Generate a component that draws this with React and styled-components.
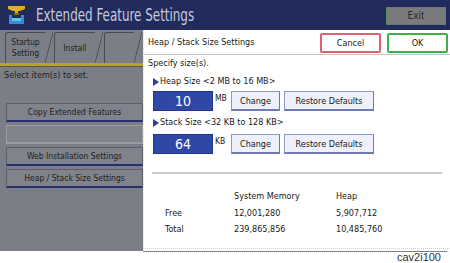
import styled, { createGlobalStyle } from "styled-components";

const GlobalStyle = createGlobalStyle`
  html, body {
    margin: 0;
    padding: 0;
    background: #ffffff;
  }
  body {
    font-family: "DejaVu Sans Condensed", "Liberation Sans", sans-serif;
  }
`;

const narrow = `"DejaVu Sans Condensed", "Liberation Sans", sans-serif`;

const Page = styled.div`
  width: 450px;
  height: 263px;
  display: flex;
  flex-direction: column;
  overflow: hidden;
  background: #ffffff;
`;

const Header = styled.header`
  height: 30px;
  flex: none;
  display: flex;
  align-items: center;
  padding: 0 4px 0 8px;
  background: #222c5c;
  box-sizing: border-box;
`;

const Title = styled.h1`
  margin: 0 0 0 11px;
  font-family: ${narrow};
  font-weight: normal;
  font-size: 17px;
  color: #c5c9dc;
  flex: 1;
  white-space: nowrap;
  transform: scaleX(0.78);
  transform-origin: left center;
`;

const ExitButton = styled.button`
  width: 60px;
  height: 18px;
  padding: 0;
  font-family: ${narrow};
  font-size: 10px;
  color: #2a2a2a;
  background: #7b7b7b;
  border: 1px dotted #3f8f3a;
  margin-top: 1px;
`;

const Main = styled.div`
  display: flex;
  height: 221px;
  flex: none;
`;

const LeftPanel = styled.div`
  width: 143px;
  flex: none;
  background: #7b7e86;
  display: flex;
  flex-direction: column;
`;

const TabRow = styled.div`
  height: 36px;
  box-sizing: border-box;
  padding: 3px 0 0 5px;
  display: flex;
  align-items: flex-end;
  border-bottom: 3px solid #b8a22c;
  box-shadow: 0 1px 0 #5a5a48;
`;

const Tab = styled.div`
  position: relative;
  width: ${({ $width }) => $width}px;
  height: 31px;
  box-sizing: border-box;
  margin-right: 9px;
  border-top: 1px solid #4a4c55;
  border-left: 1px solid #4a4c55;
  border-radius: 3px 0 0 0;
  display: flex;
  align-items: center;
  justify-content: center;
  text-align: center;
  font-family: ${narrow};
  font-size: 8.5px;
  line-height: 11px;
  color: #1e1e22;
  &::after {
    content: "";
    position: absolute;
    top: -1px;
    right: -8px;
    width: 8px;
    height: 31px;
    background: linear-gradient(
      to top right,
      transparent calc(50% - 0.8px),
      #4a4c55 50%,
      transparent calc(50% + 0.8px)
    );
    transform: scaleX(-1);
  }
`;

const Hint = styled.p`
  margin: 4px 0 0 4px;
  font-family: ${narrow};
  font-size: 9px;
  line-height: 11px;
  color: #1e1e22;
`;

const MenuList = styled.div`
  display: flex;
  flex-direction: column;
  gap: 3px;
  margin: 22px 0 0 6px;
`;

const MenuButton = styled.button`
  width: 137px;
  height: 19px;
  padding: 0;
  box-sizing: border-box;
  font-family: ${narrow};
  font-size: 8.5px;
  color: #1e1e22;
  background: #80838b;
  border: 1px solid ${({ $disabled }) => ($disabled ? "#9a9ca4" : "#5c5f6c")};
  border-bottom: 2px solid ${({ $disabled }) => ($disabled ? "#9a9ca4" : "#27306e")};
`;

const Dialog = styled.section`
  flex: 1;
  background: #ffffff;
  display: flex;
  flex-direction: column;
  border-left: 1px dotted #d8d8d8;
  border-bottom: 1px dotted #cfcfcf;
  margin-bottom: 2px;
  color: #202020;
  font-family: ${narrow};
  font-size: 9px;
  line-height: 11px;
`;

const DialogHeader = styled.div`
  height: 25px;
  box-sizing: border-box;
  padding: 1px 2px 0 4px;
  display: flex;
  align-items: center;
  border-bottom: 1px solid #c4c4c4;
`;

const DialogTitle = styled.span`
  flex: 1;
`;

const ActionButton = styled.button`
  width: 61px;
  height: 20px;
  margin-left: 6px;
  padding: 0;
  font-family: ${narrow};
  font-size: 9px;
  color: #202020;
  background: #ffffff;
  border: 2px solid ${({ $tone }) => ($tone === "cancel" ? "#e0606e" : "#3cb24c")};
  border-radius: 2px;
`;

const DialogBody = styled.div`
  padding: 3px 0 0 4px;
  display: flex;
  flex-direction: column;
`;

const SectionLabel = styled.div`
  margin: ${({ $first }) => ($first ? 7 : 6)}px 0 0 5px;
  display: flex;
  align-items: center;
  &::before {
    content: "";
    width: 0;
    height: 0;
    border-top: 4px solid transparent;
    border-bottom: 4px solid transparent;
    border-left: 6px solid #2a3f9c;
    margin-right: 1px;
  }
`;

const SizeRow = styled.div`
  display: flex;
  align-items: center;
  margin: ${({ $first }) => ($first ? 4 : 6)}px 0 0 5px;
  height: 20px;
`;

const ValueBox = styled.div`
  width: 60px;
  height: 20px;
  box-sizing: border-box;
  background: #2f48a6;
  border: 1px solid #23358a;
  color: #ffffff;
  font-family: ${narrow};
  font-size: 14px;
  display: flex;
  align-items: center;
  justify-content: center;
`;

const Unit = styled.span`
  width: 16px;
  margin-left: 2px;
  font-size: 8.5px;
  align-self: flex-start;
  padding-top: 2px;
`;

const SmallButton = styled.button`
  width: ${({ $width }) => $width}px;
  height: 20px;
  margin-right: 4px;
  padding: 0;
  box-sizing: border-box;
  font-family: ${narrow};
  font-size: 9px;
  color: #202020;
  background: #eef0fb;
  border: 1px solid #8e99c6;
  border-right-color: #6f7bb0;
  border-bottom: 2px solid #6f7bb0;
`;

const Divider = styled.hr`
  margin: 18px 8px 0 8px;
  border: none;
  border-top: 2px solid #c9c9c9;
`;

const MemoryTable = styled.div`
  display: grid;
  grid-template-columns: 69px 102px auto;
  row-gap: 5px;
  margin: 17px 0 0 21px;
  & > span:nth-child(-n + 3) {
    margin-bottom: 1px;
  }
`;

const Footer = styled.div`
  margin: 0 3px 0 143px;
  border-top: 1px solid #808080;
  text-align: right;
  padding-right: 6px;
  font-family: "Liberation Sans", Arial, sans-serif;
  font-size: 11px;
  line-height: 10px;
  color: #333333;
`;

function Logo() {
  return (
    <svg width="17" height="20" viewBox="0 0 17 20">
      <path d="M0 1 H17 V4 L12 6 H10 V8 H7 V6 H5 L0 4 Z" fill="#e0b020" />
      <rect x="6" y="8" width="5" height="2" fill="#8a6a18" />
      <path d="M1 10 H4 V15 H13 V10 H16 V19 H1 Z" fill="#3a8ad8" />
      <rect x="4" y="13" width="9" height="3" fill="#5ac8e8" />
    </svg>
  );
}

const sizes = [
  { label: "Heap Size <2 MB to 16 MB>", value: "10", unit: "MB" },
  { label: "Stack Size <32 KB to 128 KB>", value: "64", unit: "KB" },
];

const memory = [
  ["", "System Memory", "Heap"],
  ["Free", "12,001,280", "5,907,712"],
  ["Total", "239,865,856", "10,485,760"],
];

export default function App() {
  return (
    <Page>
      <GlobalStyle />
      <Header>
        <Logo />
        <Title>Extended Feature Settings</Title>
        <ExitButton>Exit</ExitButton>
      </Header>
      <Main>
        <LeftPanel>
          <TabRow>
            <Tab $width={53}>
              Startup
              <br />
              Setting
            </Tab>
            <Tab $width={54}>Install</Tab>
            <Tab $width={40} />
          </TabRow>
          <Hint>Select item(s) to set.</Hint>
          <MenuList>
            <MenuButton>Copy Extended Features</MenuButton>
            <MenuButton $disabled />
            <MenuButton>Web Installation Settings</MenuButton>
            <MenuButton>Heap / Stack Size Settings</MenuButton>
          </MenuList>
        </LeftPanel>
        <Dialog>
          <DialogHeader>
            <DialogTitle>Heap / Stack Size Settings</DialogTitle>
            <ActionButton $tone="cancel">Cancel</ActionButton>
            <ActionButton $tone="ok">OK</ActionButton>
          </DialogHeader>
          <DialogBody>
            <div>Specify size(s).</div>
            {sizes.map((s, i) => (
              <div key={s.unit}>
                <SectionLabel $first={i === 0}>{s.label}</SectionLabel>
                <SizeRow $first={i === 0}>
                  <ValueBox>{s.value}</ValueBox>
                  <Unit>{s.unit}</Unit>
                  <SmallButton $width={49}>Change</SmallButton>
                  <SmallButton $width={90}>Restore Defaults</SmallButton>
                </SizeRow>
              </div>
            ))}
          </DialogBody>
          <Divider />
          <MemoryTable>
            {memory.flat().map((cell, i) => (
              <span key={i}>{cell}</span>
            ))}
          </MemoryTable>
        </Dialog>
      </Main>
      <Footer>cav2i100</Footer>
    </Page>
  );
}
